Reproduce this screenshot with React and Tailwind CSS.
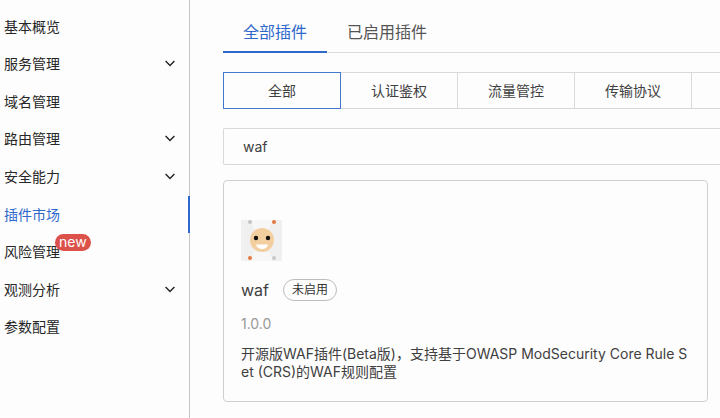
import { useState } from 'react';
import clsx from 'clsx';

const menuItems = [
  { label: '基本概览' },
  { label: '服务管理', expandable: true },
  { label: '域名管理' },
  { label: '路由管理', expandable: true },
  { label: '安全能力', expandable: true },
  { label: '插件市场', active: true },
  { label: '风险管理', isNew: true },
  { label: '观测分析', expandable: true },
  { label: '参数配置' },
];

const tabs = ['全部插件', '已启用插件'];
const categories = ['全部', '认证鉴权', '流量管控', '传输协议'];

const plugins = [
  {
    name: 'waf',
    status: '未启用',
    version: '1.0.0',
    description: '开源版WAF插件(Beta版)，支持基于OWASP ModSecurity Core Rule Set (CRS)的WAF规则配置',
  },
];

function ChevronIcon() {
  return (
    <svg className="h-2 w-[10px]" viewBox="0 0 10 8" fill="none" stroke="#222" strokeWidth="1.4" aria-hidden="true">
      <path d="M0.6 1 L5 5.4 L9.4 1" />
    </svg>
  );
}

function PluginIcon() {
  return (
    <svg className="h-[41px] w-[41px]" viewBox="0 0 41 41" aria-hidden="true">
      <rect width="41" height="41" fill="#f0f0f1" />
      <path d="M9 0h23l-4 9h-15z M9 41h23l-4-9h-15z" fill="#f7f7f8" />
      <circle cx="21" cy="20" r="12" fill="#f3cfa0" />
      <circle cx="15" cy="18" r="2.2" fill="#111" />
      <circle cx="27" cy="18" r="2.2" fill="#111" />
      <path d="M15 24.5h12c-.6 3-3 4.500-6 4.500s-5.400-1.500-6-4.500z" fill="#fff" />
      <circle cx="9" cy="2" r="2" fill="#c4c4c6" />
      <circle cx="33" cy="2" r="2" fill="#e5783f" />
      <circle cx="9" cy="38" r="2" fill="#e5783f" />
      <circle cx="33" cy="38" r="2" fill="#c9c9cb" />
    </svg>
  );
}

function Sidebar() {
  return (
    <nav className="w-[190px] shrink-0 border-r border-[#c6c6c6] pt-2">
      <ul className="grid h-[338px] auto-rows-fr">
        {menuItems.map((item) => (
          <li key={item.label}>
            <a
              href="#"
              className={clsx(
                'flex h-full items-center justify-between pl-1 text-sm',
                item.active ? '-mr-px border-r-2 border-[#2f68cc] text-[#2f68cc]' : 'pr-[14px] text-[#262626]'
              )}
            >
              <span className="relative">
                {item.label}
                {item.isNew && (
                  <span className="absolute -top-2 left-[51px] h-[17px] rounded-full bg-[#dc5149] px-1 text-sm leading-4 text-white">
                    new
                  </span>
                )}
              </span>
              {item.expandable && <ChevronIcon />}
            </a>
          </li>
        ))}
      </ul>
    </nav>
  );
}

function PluginCard({ plugin }) {
  return (
    <article className="mt-[15px] mr-3 rounded border border-[#cfcfcf] px-[17px] pt-[39px] pb-5">
      <PluginIcon />
      <div className="mt-[17px] flex items-center gap-[14px]">
        <h3 className="text-base leading-6 text-[#404040]">{plugin.name}</h3>
        <span className="rounded-full border border-[#bdbdbd] px-2 text-xs leading-5 text-[#333]">
          {plugin.status}
        </span>
      </div>
      <p className="mt-3 text-sm leading-5 text-[#999]">{plugin.version}</p>
      <p className="mt-[11px] text-sm leading-[18px] break-all text-[#404040]">{plugin.description}</p>
    </article>
  );
}

function App() {
  const [tab, setTab] = useState('全部插件');
  const [category, setCategory] = useState('全部');
  const [keyword, setKeyword] = useState('waf');

  return (
    <div className="flex min-h-screen overflow-hidden bg-[#fdfdfd] font-['Inter','Noto_Sans_CJK_SC',sans-serif]">
      <Sidebar />
      <main className="min-w-0 flex-1 pt-[13px] pl-[33px]">
        <div className="flex border-b border-[#dcdcdc]">
          {tabs.map((name) => (
            <button
              key={name}
              type="button"
              onClick={() => setTab(name)}
              className={clsx(
                '-mb-px h-10 border-b-2 px-5 text-base',
                tab === name ? 'border-[#2f68cc] text-[#2f68cc]' : 'border-transparent text-[#555]'
              )}
            >
              {name}
            </button>
          ))}
        </div>

        <div className="mt-[19px] flex">
          {categories.map((name) => (
            <button
              key={name}
              type="button"
              onClick={() => setCategory(name)}
              className={clsx(
                '-mr-px h-[37px] w-[118px] shrink-0 border text-sm text-[#404040]',
                category === name ? 'relative border-[#4277cc]' : 'border-[#d9d9d9]'
              )}
            >
              {name}
            </button>
          ))}
          <div className="flex-1 border border-r-0 border-[#d9d9d9]" />
        </div>

        <input
          type="text"
          aria-label="搜索插件"
          value={keyword}
          onChange={(e) => setKeyword(e.target.value)}
          className="mt-[19px] block h-[37px] w-full rounded-l-xs border border-r-0 border-[#d9d9d9] px-[19px] text-sm text-[#404040] outline-none"
        />

        {plugins.map((plugin) => (
          <PluginCard key={plugin.name} plugin={plugin} />
        ))}
      </main>
    </div>
  );
}

export default App;
